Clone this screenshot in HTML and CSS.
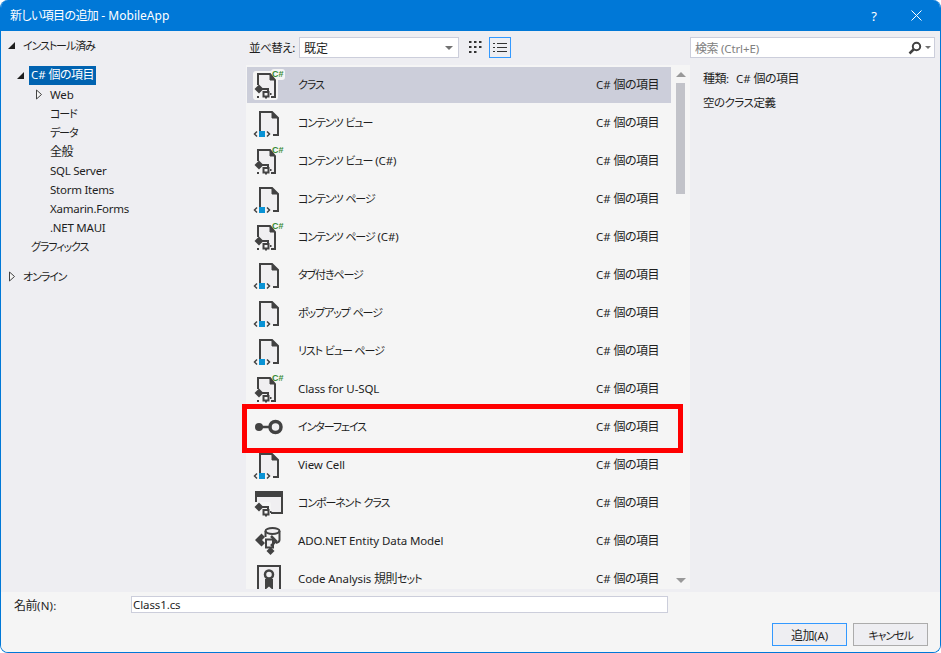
FILE: index.html
```html
<!DOCTYPE html>
<html lang="ja">
<head>
<meta charset="utf-8">
<title>新しい項目の追加 - MobileApp</title>
<link rel="stylesheet" href="styles.css">
</head>
<body>
<svg class="defs" width="0" height="0">
  <symbol id="gears" viewBox="0 0 36 36">
    <path d="M9 17.500L13.500 22 9 26.500 4.500 22z" fill="#424242"/>
    <path d="M12 22h6v3" stroke="#424242" stroke-width="2" fill="none"/>
    <rect x="13.500" y="25" width="5" height="4.500" fill="none" stroke="#424242" stroke-width="2"/>
    <path d="M20 27h1.500M16 30v1.500" stroke="#424242" stroke-width="2" fill="none"/>
  </symbol>
  <symbol id="ic-class" viewBox="0 0 36 36">
    <path d="M8 18V7h12l5 6v17h-4" fill="#f0eff1" stroke="#424242" stroke-width="2"/>
    <path d="M7 30h2" stroke="#424242" stroke-width="2"/>
    <path d="M20 7v6h5" fill="#424242" stroke="#424242"/>
    <use href="#gears" width="36" height="36"/>
  </symbol>
  <symbol id="ic-class-sel" viewBox="0 0 36 36">
    <rect x="3" y="4" width="25" height="29" rx="3" fill="#f5f5f5"/>
    <rect x="21" y="2" width="14" height="11" rx="3" fill="#f5f5f5"/>
    <use href="#ic-class" width="36" height="36"/>
  </symbol>
  <symbol id="ic-page" viewBox="0 0 36 36">
    <path d="M10 26V7h12l6 6v17h-5" fill="#f0eff1" stroke="#424242" stroke-width="2"/>
    <path d="M22 7v6h6" fill="#424242" stroke="#424242"/>
    <rect x="9" y="26" width="6" height="6" fill="#0a93d5"/>
    <path d="M7 26.500L4.500 29 7 31.500M17 26.500L19.500 29 17 31.500" fill="none" stroke="#424242" stroke-width="1.500"/>
  </symbol>
  <symbol id="ic-interface" viewBox="0 0 36 36">
    <circle cx="9" cy="18" r="4" fill="#424242"/>
    <path d="M10 18h9" stroke="#424242" stroke-width="2.500"/>
    <circle cx="25.500" cy="18" r="5.500" fill="#f0eff1" stroke="#424242" stroke-width="3.500"/>
  </symbol>
  <symbol id="ic-component" viewBox="0 0 36 36">
    <rect x="6" y="7" width="26" height="21" fill="#f0eff1" stroke="#424242" stroke-width="2"/>
    <rect x="5" y="6" width="28" height="6" fill="#424242"/>
    <rect x="3" y="17" width="18" height="15" rx="2" fill="#f5f5f5"/>
    <use href="#gears" width="36" height="36"/>
  </symbol>
  <symbol id="ic-ado" viewBox="0 0 36 36">
    <ellipse cx="22.500" cy="8" rx="7" ry="3" fill="#f0eff1" stroke="#424242" stroke-width="2"/>
    <path d="M15.500 8v6M29.500 8v9c0 1.500-1.500 2.500-3.500 3" fill="none" stroke="#424242" stroke-width="2"/>
    <path d="M5 17l6.500-6.500L15 14l-3 3 3 3-3.500 3.500z" fill="#424242"/>
    <path d="M16 16.500h7v8h-7z" fill="#f0eff1" stroke="#424242" stroke-width="2"/>
    <path d="M21 13l5 5-5 5" fill="none" stroke="#424242" stroke-width="2.500"/>
    <path d="M20.500 24l4 4-4 4-4-4z" fill="#424242"/>
  </symbol>
  <symbol id="ic-rule" viewBox="0 0 36 36">
    <rect x="8" y="5" width="22" height="31" fill="#f0eff1" stroke="#424242" stroke-width="2"/>
    <path d="M15 18v11l4-3.500 4 3.500V18z" fill="#424242"/>
    <circle cx="19" cy="13.500" r="4" fill="#f0eff1" stroke="#424242" stroke-width="2.500"/>
  </symbol>
  <symbol id="tri-solid" viewBox="0 0 9 9">
    <path d="M8 1v7H1z" fill="#1e1e1e"/>
  </symbol>
  <symbol id="tri-open" viewBox="0 0 9 11">
    <path d="M1.500 1l5 4.500-5 4.500z" fill="#f5f5f5" stroke="#424242"/>
  </symbol>
</svg>

<div class="dialog">
  <header class="titlebar">
    <span class="title"><span class="title-ja">新しい項目の追加</span> - MobileApp</span>
    <span class="help">?</span>
    <svg class="close" width="11" height="11" viewBox="0 0 11 11"><path d="M.5.500l10 10M10.500.500l-10 10" stroke="#fff" fill="none"/></svg>
  </header>

  <main class="main">
    <nav class="tree">
      <div class="node top"><svg class="tw"><use href="#tri-solid"/></svg><span class="ja">インストール済み</span></div>
      <div class="node group lvl1"><svg class="tw"><use href="#tri-solid"/></svg><span class="current">C# <span class="kj">個の項目</span></span></div>
      <div class="node lvl2"><svg class="tw2"><use href="#tri-open"/></svg><span>Web</span></div>
      <div class="node lvl3"><span class="ja">コード</span></div>
      <div class="node lvl3"><span class="ja">データ</span></div>
      <div class="node lvl3"><span class="kj">全般</span></div>
      <div class="node lvl3">SQL Server</div>
      <div class="node lvl3">Storm Items</div>
      <div class="node lvl3">Xamarin.Forms</div>
      <div class="node lvl3">.NET MAUI</div>
      <div class="node lvl1b"><span class="ja">グラフィックス</span></div>
      <div class="node online"><svg class="tw2"><use href="#tri-open"/></svg><span class="ja">オンライン</span></div>
    </nav>

    <section class="center">
      <div class="toolbar">
        <label class="sort-label"><span class="jm">並べ替え</span>:</label>
        <div class="select"><span>既定</span><i class="caret"></i></div>
        <svg class="view-grid" width="15" height="15" viewBox="0 0 15 15">
          <path d="M1 1h2.500v2H1zM6 1h2.500v2H6zM11 1h2.500v2H11zM1 6h2.500v2H1zM6 6h2.500v2H6zM11 6h2.500v2H11zM1 11h2.500v2H1zM6 11h2.500v2H6z" fill="#333"/>
        </svg>
        <div class="view-list">
          <svg width="14" height="11" viewBox="0 0 14 11">
            <path d="M0 1h2v1H0zM4 1h10v1H4zM0 5h2v1H0zM4 5h10v1H4zM0 9h2v1H0zM4 9h10v1H4z" fill="#333"/>
          </svg>
        </div>
      </div>
      <div class="list">
        <div class="rows">
        <div class="row selected"><div class="ico"><svg class="ico-svg"><use href="#ic-class-sel"/></svg><span class="badge">C#</span></div><span class="name"><span class="ja">クラス</span></span><span class="lang">C# <span class="kj">個の項目</span></span></div>
        <div class="row"><div class="ico"><svg class="ico-svg"><use href="#ic-page"/></svg></div><span class="name"><span class="ja">コンテンツ ビュー</span></span><span class="lang">C# <span class="kj">個の項目</span></span></div>
        <div class="row"><div class="ico"><svg class="ico-svg"><use href="#ic-class"/></svg><span class="badge">C#</span></div><span class="name"><span class="ja">コンテンツ ビュー</span> (C#)</span><span class="lang">C# <span class="kj">個の項目</span></span></div>
        <div class="row"><div class="ico"><svg class="ico-svg"><use href="#ic-page"/></svg></div><span class="name"><span class="ja">コンテンツ ページ</span></span><span class="lang">C# <span class="kj">個の項目</span></span></div>
        <div class="row"><div class="ico"><svg class="ico-svg"><use href="#ic-class"/></svg><span class="badge">C#</span></div><span class="name"><span class="ja">コンテンツ ページ</span> (C#)</span><span class="lang">C# <span class="kj">個の項目</span></span></div>
        <div class="row"><div class="ico"><svg class="ico-svg"><use href="#ic-page"/></svg></div><span class="name"><span class="ja">タブ付きページ</span></span><span class="lang">C# <span class="kj">個の項目</span></span></div>
        <div class="row"><div class="ico"><svg class="ico-svg"><use href="#ic-page"/></svg></div><span class="name"><span class="ja">ポップアップ ページ</span></span><span class="lang">C# <span class="kj">個の項目</span></span></div>
        <div class="row"><div class="ico"><svg class="ico-svg"><use href="#ic-page"/></svg></div><span class="name"><span class="ja">リスト ビュー ページ</span></span><span class="lang">C# <span class="kj">個の項目</span></span></div>
        <div class="row"><div class="ico"><svg class="ico-svg"><use href="#ic-class"/></svg><span class="badge">C#</span></div><span class="name">Class for U-SQL</span><span class="lang">C# <span class="kj">個の項目</span></span></div>
        <div class="row"><div class="ico"><svg class="ico-svg"><use href="#ic-interface"/></svg></div><span class="name"><span class="ja">インターフェイス</span></span><span class="lang">C# <span class="kj">個の項目</span></span></div>
        <div class="row"><div class="ico"><svg class="ico-svg"><use href="#ic-page"/></svg></div><span class="name">View Cell</span><span class="lang">C# <span class="kj">個の項目</span></span></div>
        <div class="row"><div class="ico"><svg class="ico-svg"><use href="#ic-component"/></svg></div><span class="name"><span class="ja">コンポーネント クラス</span></span><span class="lang">C# <span class="kj">個の項目</span></span></div>
        <div class="row"><div class="ico"><svg class="ico-svg"><use href="#ic-ado"/></svg></div><span class="name">ADO.NET Entity Data Model</span><span class="lang">C# <span class="kj">個の項目</span></span></div>
        <div class="row"><div class="ico"><svg class="ico-svg"><use href="#ic-rule"/></svg></div><span class="name">Code Analysis <span class="kj">規則</span><span class="ja">セット</span></span><span class="lang">C# <span class="kj">個の項目</span></span></div>
        </div>
        <div class="scrollbar">
          <i class="arrow-up"></i>
          <i class="thumb"></i>
          <i class="arrow-down"></i>
        </div>
        <div class="callout"></div>
      </div>
    </section>

    <aside class="details">
      <div class="search">
        <span class="placeholder"><span class="kj">検索</span> (Ctrl+E)</span>
        <svg width="14" height="14" viewBox="0 0 14 14"><circle cx="8.500" cy="5.500" r="3.700" fill="none" stroke="#424242" stroke-width="2"/><path d="M6 8l-4.500 4.500" stroke="#424242" stroke-width="2.500"/></svg>
        <i class="caret small"></i>
      </div>
      <div class="info">
        <p class="kind"><span><span class="kj">種類</span>:</span><span>C# <span class="kj">個の項目</span></span></p>
        <p><span class="jm">空のクラス定義</span></p>
      </div>
    </aside>
  </main>

  <footer class="footer">
    <div class="name-row">
      <label class="name-label"><span class="kj">名前</span>(N):</label>
      <div class="input">Class1.cs</div>
    </div>
    <div class="buttons">
      <button class="btn primary"><span class="kj">追加</span>(A)</button>
      <button class="btn"><span class="ja">キャンセル</span></button>
    </div>
  </footer>
</div>
</body>
</html>
```
FILE: styles.css
```css
* { box-sizing: border-box; }
html, body { margin: 0; padding: 0; background: #fff; }
body {
  width: 941px;
  height: 653px;
  overflow: hidden;
  font-family: "Noto Sans", "Noto Sans CJK JP", sans-serif;
  font-size: 11.5px;
  letter-spacing: -.1px;
  color: #1e1e1e;
  font-feature-settings: "palt";
}
.defs { position: absolute; }
.ja { font-size: 11px; letter-spacing: -1.1px; word-spacing: 1px; }
.jm { font-size: 11.5px; letter-spacing: -.5px; }
.kj { font-size: 12px; letter-spacing: -.5px; }

.dialog {
  width: 941px;
  height: 653px;
  display: flex;
  flex-direction: column;
  border: 1px solid #0078d7;
  border-top: 0;
  border-radius: 8px;
  overflow: hidden;
  background: #eeeef2;
}
.titlebar {
  height: 31px;
  flex: none;
  display: flex;
  align-items: center;
  background: #0078d7;
  color: #fff;
  padding-left: 9px;
  padding-right: 18px;
  font-size: 12px;
  letter-spacing: 0;
}
.title { flex: 1; line-height: 31px; }
.title-ja { letter-spacing: -.6px; }
.help { font-size: 13px; margin-right: 34px; }

.main {
  flex: 1;
  min-height: 0;
  display: grid;
  grid-template-columns: 245px 444px 1fr;
}

.tree { padding-top: 5px; }
.node { height: 19px; line-height: 17px; padding-bottom: 1px; display: flex; align-items: center; white-space: nowrap; }
.tw { width: 9px; height: 9px; flex: none; }
.tw2 { width: 9px; height: 11px; flex: none; }
.top { padding-left: 6px; margin-bottom: 11px; }
.top span { margin-left: 7px; }
.lvl1 { padding-left: 15px; }
.lvl1 .current {
  align-self: flex-start;
  margin-left: 4px;
  padding: 0 2px;
  height: 19px;
  line-height: 18px;
  background: #0063b1;
  color: #fff;
  width: 67px;
}
.lvl2 { padding-left: 34px; }
.lvl2 span { margin-left: 6px; }
.lvl3 { padding-left: 49px; letter-spacing: -.25px; }
.lvl1b { padding-left: 30px; margin-bottom: 11px; }
.online { padding-left: 7px; }
.online span { margin-left: 6px; }

.center { display: flex; flex-direction: column; min-height: 0; }
.toolbar { height: 34px; flex: none; display: flex; align-items: flex-start; padding-top: 6px; padding-left: 3px; }
.sort-label { width: 50px; flex: none; line-height: 21px; white-space: nowrap; }
.select {
  width: 160px;
  height: 21px;
  background: #fff;
  border: 1px solid #cccedb;
  display: flex;
  align-items: center;
  justify-content: space-between;
  padding: 0 3px 0 4px;
  font-size: 12px;
  letter-spacing: 0;
}
.caret { width: 0; height: 0; border: 4px solid transparent; border-top-color: #717171; border-bottom: 0; margin-right: 2px; }
.caret.small { border-width: 3.500px; border-bottom: 0; margin: 0 0 0 3px; }
.view-grid { margin: 3px 0 0 9px; }
.view-list {
  width: 22px;
  height: 21px;
  margin-left: 6px;
  border: 1px solid #3399ff;
  display: flex;
  align-items: center;
  justify-content: center;
}

.list {
  position: relative;
  height: 524px;
  flex: none;
  background: #f5f5f5;
}
.rows {
  height: 100%;
  overflow: hidden;
  padding-top: 1px;
}
.row {
  width: 424px;
  height: 36px;
  margin: 1px 0 2px 1px;
  padding-bottom: 2px;
  display: flex;
  align-items: center;
  white-space: nowrap;
}
.row.selected { background: #ccceda; }
.ico { position: relative; width: 36px; height: 36px; flex: none; margin-left: 3px; align-self: flex-start; }
.ico-svg { display: block; width: 36px; height: 36px; }
.badge {
  position: absolute;
  left: 22px;
  top: 2px;
  font: bold 9px/11px "Liberation Sans", sans-serif;
  letter-spacing: 0;
  color: #388a34;
}
.name { margin-left: 12px; flex: 1; }
.lang { margin-right: 12px; }

.scrollbar {
  position: absolute;
  top: 0;
  right: 0;
  bottom: 0;
  width: 19px;
  display: flex;
  flex-direction: column;
  align-items: center;
  padding: 7px 0 0 0;
}
.arrow-up { width: 0; height: 0; border: 5px solid transparent; border-bottom-color: #999; border-top: 0; }
.thumb { width: 9px; height: 111px; margin-top: 6px; background: #c2c3c9; }
.arrow-down { position: absolute; bottom: 6px; width: 0; height: 0; border: 5px solid transparent; border-top-color: #999; border-bottom: 0; }

.callout {
  position: absolute;
  left: -4px;
  top: 339px;
  width: 441px;
  height: 49px;
  border: 5px solid #ff0000;
}

.details { min-width: 0; }
.search {
  margin: 6px 5px 0 0;
  height: 21px;
  background: #fff;
  border: 1px solid #cccedb;
  display: flex;
  align-items: center;
  padding: 0 3px 0 4px;
}
.placeholder { flex: 1; color: #808080; }
.info { padding: 12px 0 0 13px; }
.info p { margin: 0 0 7px; line-height: 17px; }
.kind { display: flex; gap: 7px; }

.footer {
  height: 60px;
  flex: none;
  background: #f5f5f5;
  padding-top: 4px;
  display: flex;
  flex-direction: column;
}
.name-row { display: flex; align-items: center; height: 17px; }
.name-label { width: 117px; margin-left: 13px; letter-spacing: .2px; }
.input {
  width: 537px;
  height: 17px;
  line-height: 15px;
  background: #fff;
  border: 1px solid #cccedb;
  padding-left: 1px;
}
.buttons { display: flex; justify-content: flex-end; gap: 6px; margin-top: 10px; padding-right: 12px; }
.btn {
  width: 75px;
  height: 23px;
  padding: 0;
  background: #eeeef2;
  border: 1px solid #acacac;
  font: inherit;
  letter-spacing: inherit;
  color: inherit;
}
.btn.primary { border-color: #3399ff; }
```
